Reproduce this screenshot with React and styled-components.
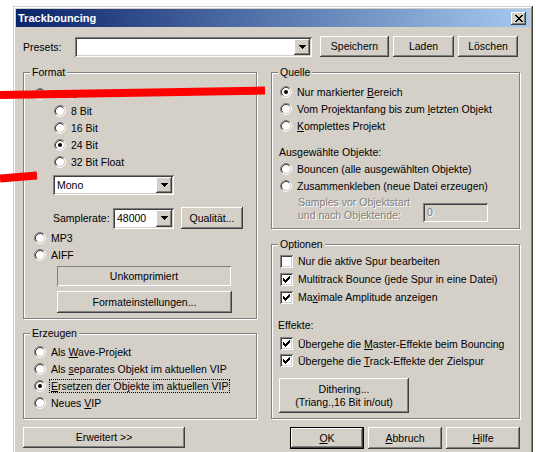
import React from "react";
import styled, { createGlobalStyle } from "styled-components";

const face = "#D4D0C8";

const GlobalStyle = createGlobalStyle`
  html, body {
    margin: 0;
    height: 100%;
    overflow: hidden;
    background: #fff;
  }
  body {
    font-family: "Liberation Sans", Arial, sans-serif;
    font-size: 10.5px;
    color: #000;
  }
`;

const raised = `
  box-shadow: inset -1px -1px #404040, inset 1px 1px #fff,
    inset -2px -2px #808080, inset 2px 2px ${face};
`;

const sunken = `
  box-shadow: inset 1px 1px #808080, inset -1px -1px #fff,
    inset 2px 2px #404040, inset -2px -2px ${face};
`;

const Dialog = styled.div`
  width: 520px;
  height: 460px;
  margin: 6px 0 0 13px;
  padding: 3px;
  box-sizing: border-box;
  background: ${face};
  box-shadow: inset -1px -1px #404040, inset 1px 1px ${face},
    inset -2px -2px #808080, inset 2px 2px #fff;
`;

const TitleBar = styled.div`
  height: 18px;
  display: flex;
  align-items: center;
  justify-content: space-between;
  padding: 0 4px 0 2px;
  background: linear-gradient(to right, #0a246a, #a6caf0);
`;

const Title = styled.span`
  color: #fff;
  font-weight: bold;
  font-size: 11px;
`;

const CloseButton = styled.div`
  width: 15px;
  height: 13px;
  background: ${face};
  display: flex;
  align-items: center;
  justify-content: center;
  ${raised}
`;

const Body = styled.div`
  padding: 9px 10px 0 7px;
`;

const PresetRow = styled.div`
  display: flex;
  align-items: center;
  height: 21px;
`;

const Label = styled.span`
  width: ${(p) => p.$w}px;
  flex: none;
  white-space: nowrap;
`;

const Button = styled.button`
  flex: none;
  width: ${(p) => p.$w}px;
  height: ${(p) => p.$h || 21}px;
  margin: ${(p) => p.$mt || 0}px 0 0 ${(p) => p.$ml || 0}px;
  padding: 0;
  border: none;
  background: ${face};
  font: inherit;
  line-height: 13px;
  color: #000;
  ${raised}
`;

const DefaultButton = styled(Button)`
  box-sizing: border-box;
  border: 1px solid #000;
`;

const Columns = styled.div`
  display: grid;
  grid-template-columns: 234px 249px;
  column-gap: 14px;
  align-items: start;
  margin-top: 15px;
`;

const Column = styled.div`
  display: flex;
  flex-direction: column;
  align-items: flex-start;
`;

const Group = styled.div`
  align-self: stretch;
  height: ${(p) => p.$h}px;
  box-sizing: border-box;
  margin-top: ${(p) => p.$mt || 0}px;
  border: 1px solid #808080;
  box-shadow: 1px 1px 0 #fff, inset 1px 1px 0 #fff;
  display: flex;
  flex-direction: column;
  align-items: flex-start;
`;

const Caption = styled.span`
  margin: -7px 0 0 6px;
  padding: 0 2px;
  line-height: 12px;
  background: ${face};
`;

const Row = styled.div`
  display: flex;
  align-items: center;
  gap: ${(p) => (p.$gap === undefined ? 5 : p.$gap)}px;
  height: ${(p) => p.$h || 17}px;
  margin: ${(p) => p.$mt || 0}px 0 0 ${(p) => p.$ml || 0}px;
  white-space: nowrap;
`;

const Note = styled.span`
  line-height: 12px;
  margin: ${(p) => p.$mt || 0}px 0 0 ${(p) => p.$ml || 0}px;
  white-space: nowrap;
`;

const Key = styled.u`
  text-underline-offset: 1px;
`;

const Focused = styled.span`
  outline: 1px dotted #000;
  outline-offset: 0;
  padding: 0 1px;
  margin-left: -1px;
`;

const Glyph = styled.svg`
  flex: none;
  display: block;
`;

const CheckFrame = styled.span`
  flex: none;
  width: 13px;
  height: 13px;
  background: #fff;
  ${sunken}
`;

const ComboField = styled.div`
  flex: none;
  width: ${(p) => p.$w}px;
  height: ${(p) => p.$h}px;
  box-sizing: border-box;
  padding: 2px;
  background: #fff;
  display: flex;
  ${sunken}
`;

const ComboValue = styled.span`
  flex: 1;
  display: flex;
  align-items: center;
  padding-left: 2px;
`;

const DropButton = styled.span`
  width: 16px;
  flex: none;
  background: ${face};
  display: flex;
  align-items: center;
  justify-content: center;
  ${raised}
`;

const StaticBox = styled.div`
  width: 174px;
  height: 20px;
  margin: 3px 0 0 33px;
  display: flex;
  align-items: center;
  justify-content: center;
  box-shadow: inset 1px 1px #808080, inset -1px -1px #fff;
`;

const Disabled = styled.span`
  color: #808080;
  text-shadow: 1px 1px 0 #fff;
  line-height: 13px;
`;

const SampleRange = styled.div`
  display: flex;
  align-items: flex-end;
  margin: 2px 0 0 26px;
`;

const SampleLabel = styled.div`
  width: 125px;
  display: flex;
  flex-direction: column;
`;

const Field = styled.div`
  width: 65px;
  height: 19px;
  box-sizing: border-box;
  padding: 2px 4px;
  display: flex;
  align-items: center;
  background: ${face};
  ${sunken}
`;

const ButtonRow = styled.div`
  align-self: stretch;
  display: flex;
  justify-content: flex-end;
  gap: 4px;
  margin-top: 8px;
`;

const Annotation = styled.svg`
  position: absolute;
  left: 0;
  top: 0;
  pointer-events: none;
`;

const Arrow = () => (
  <Glyph width="7" height="4" viewBox="0 0 7 4" shapeRendering="crispEdges">
    <rect x="0" y="0" width="7" height="1" />
    <rect x="1" y="1" width="5" height="1" />
    <rect x="2" y="2" width="3" height="1" />
    <rect x="3" y="3" width="1" height="1" />
  </Glyph>
);

const closeRows = ["11000011", "01100110", "00111100", "00011000", "00111100", "01100110", "11000011"];

const CloseGlyph = () => (
  <Glyph width="8" height="7" viewBox="0 0 8 7" shapeRendering="crispEdges">
    {closeRows.flatMap((row, y) =>
      row.split("").map((c, x) => (c === "1" ? <rect key={`${x}-${y}`} x={x} y={y} width="1" height="1" /> : null))
    )}
  </Glyph>
);

const RadioIcon = ({ on }) => (
  <Glyph width="12" height="12" viewBox="0 0 12 12" fill="none">
    <circle cx="6" cy="6" r="4" fill="#fff" />
    <path d="M2.11 9.89A5.5 5.5 0 0 1 9.89 2.11" stroke="#808080" />
    <path d="M9.89 2.11A5.5 5.5 0 0 1 2.11 9.89" stroke="#fff" />
    <path d="M2.82 9.18A4.5 4.5 0 0 1 9.18 2.82" stroke="#404040" />
    <path d="M9.18 2.82A4.5 4.5 0 0 1 2.82 9.18" stroke={face} />
    {on && <circle cx="6" cy="6" r="2" fill="#000" />}
  </Glyph>
);

// classic tick: seven columns, three pixels tall each
const tick = [5, 6, 7, 6, 5, 4, 3];

const CheckIcon = ({ on }) => (
  <CheckFrame>
    {on && (
      <Glyph width="13" height="13" viewBox="0 0 13 13" shapeRendering="crispEdges">
        {tick.map((y, i) => (
          <rect key={i} x={3 + i} y={y} width="1" height="3" />
        ))}
      </Glyph>
    )}
  </CheckFrame>
);

const Radio = ({ on, children, ...rest }) => (
  <Row {...rest}>
    <RadioIcon on={on} />
    <span>{children}</span>
  </Row>
);

const Check = ({ on, children, ...rest }) => (
  <Row {...rest}>
    <CheckIcon on={on} />
    <span>{children}</span>
  </Row>
);

const Combo = ({ w, h, value }) => (
  <ComboField $w={w} $h={h}>
    <ComboValue>{value}</ComboValue>
    <DropButton>
      <Arrow />
    </DropButton>
  </ComboField>
);

export default function App() {
  return (
    <>
      <GlobalStyle />
      <Dialog>
        <TitleBar>
          <Title>Trackbouncing</Title>
          <CloseButton>
            <CloseGlyph />
          </CloseButton>
        </TitleBar>

        <Body>
          <PresetRow>
            <Label $w={52}>Presets:</Label>
            <Combo w={237} h={20} value="" />
            <Button $w={69} $ml={8}>Speichern</Button>
            <Button $w={61} $ml={4}>Laden</Button>
            <Button $w={60} $ml={4}>Löschen</Button>
          </PresetRow>

          <Columns>
            <Column>
              <Group $h={247}>
                <Caption>Format</Caption>
                <Radio on $mt={7} $ml={10}>Wave</Radio>
                <Radio $ml={30}>8 Bit</Radio>
                <Radio $ml={30}>16 Bit</Radio>
                <Radio on $ml={30}>24 Bit</Radio>
                <Radio $ml={30}>32 Bit Float</Radio>
                <Row $mt={5} $ml={29} $h={20}>
                  <Combo w={121} h={20} value="Mono" />
                </Row>
                <Row $mt={12} $ml={29} $h={22} $gap={0}>
                  <Label $w={60}>Samplerate:</Label>
                  <Combo w={61} h={21} value="48000" />
                  <Button $w={62} $h={22} $ml={7}>Qualität...</Button>
                </Row>
                <Radio $ml={10}>MP3</Radio>
                <Radio $ml={10}>AIFF</Radio>
                <StaticBox>Unkomprimiert</StaticBox>
                <Button $w={175} $h={22} $mt={5} $ml={33}>Formateinstellungen...</Button>
              </Group>

              <Group $h={86} $mt={14}>
                <Caption>Erzeugen</Caption>
                <Radio $mt={4} $ml={10}>
                  Als <Key>W</Key>ave-Projekt
                </Radio>
                <Radio $ml={10}>
                  Als <Key>s</Key>eparates Objekt im aktuellen VIP
                </Radio>
                <Radio on $ml={10}>
                  <Focused>
                    <Key>E</Key>rsetzen der Objekte im aktuellen VIP
                  </Focused>
                </Radio>
                <Radio $ml={10}>
                  Neues <Key>V</Key>IP
                </Radio>
              </Group>

              <Button $w={162} $h={21} $mt={8}>Erweitert &gt;&gt;</Button>
            </Column>

            <Column>
              <Group $h={157}>
                <Caption>Quelle</Caption>
                <Radio on $mt={5} $ml={8}>
                  Nur markierter <Key>B</Key>ereich
                </Radio>
                <Radio $ml={8}>
                  Vom Projektanfang bis zum <Key>l</Key>etzten Objekt
                </Radio>
                <Radio $ml={8}>
                  <Key>K</Key>omplettes Projekt
                </Radio>
                <Note $mt={12} $ml={7}>Ausgewählte Objekte:</Note>
                <Radio $mt={2} $ml={8}>Bouncen (alle ausgewählten Objekte)</Radio>
                <Radio $ml={8}>Zusammenkleben (neue Datei erzeugen)</Radio>
                <SampleRange>
                  <SampleLabel>
                    <Disabled>Samples vor Objektstart</Disabled>
                    <Disabled>und nach Objektende:</Disabled>
                  </SampleLabel>
                  <Field>
                    <Disabled>0</Disabled>
                  </Field>
                </SampleRange>
              </Group>

              <Group $h={175} $mt={15}>
                <Caption>Optionen</Caption>
                <Check $mt={2} $ml={8} $h={18}>Nur die aktive Spur bearbeiten</Check>
                <Check on $ml={8} $h={18}>Multitrack Bounce (jede Spur in eine Datei)</Check>
                <Check on $ml={8} $h={18}>
                  Ma<Key>x</Key>imale Amplitude anzeigen
                </Check>
                <Note $mt={13} $ml={6}>Effekte:</Note>
                <Check on $mt={4} $ml={8}>
                  Übergehe die <Key>M</Key>aster-Effekte beim Bouncing
                </Check>
                <Check on $ml={8}>
                  Übergehe die <Key>T</Key>rack-Effekte der Zielspur
                </Check>
                <Button $w={130} $h={35} $mt={9} $ml={7}>
                  Dithering...
                  <br />
                  (Triang.,16 Bit in/out)
                </Button>
              </Group>

              <ButtonRow>
                <DefaultButton $w={74} $h={22}>
                  <Key>O</Key>K
                </DefaultButton>
                <Button $w={74} $h={22}>
                  <Key>A</Key>bbruch
                </Button>
                <Button $w={74} $h={22}>
                  <Key>H</Key>ilfe
                </Button>
              </ButtonRow>
            </Column>
          </Columns>
        </Body>
      </Dialog>

      <Annotation width="536" height="452" viewBox="0 0 536 452">
        <line x1="0" y1="95" x2="265" y2="90.5" stroke="#ff0000" strokeWidth="8" />
        <line x1="0" y1="178.5" x2="37" y2="175.5" stroke="#ff0000" strokeWidth="8" />
      </Annotation>
    </>
  );
}
